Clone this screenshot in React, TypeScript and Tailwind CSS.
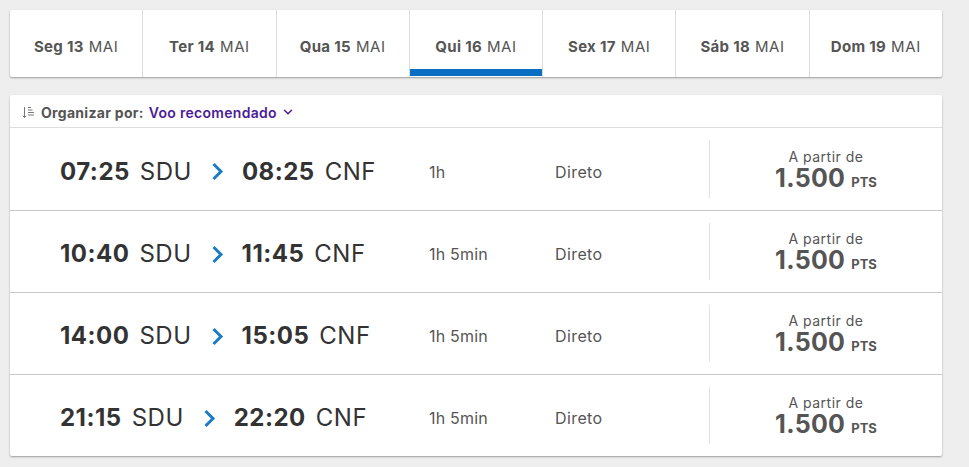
import { ChevronDown } from "lucide-react"

const days = [
  { d: "Seg", n: "13" },
  { d: "Ter", n: "14" },
  { d: "Qua", n: "15" },
  { d: "Qui", n: "16", active: true },
  { d: "Sex", n: "17" },
  { d: "Sáb", n: "18" },
  { d: "Dom", n: "19" },
]

const flights = [
  { dep: "07:25", arr: "08:25", dur: "1h" },
  { dep: "10:40", arr: "11:45", dur: "1h 5min" },
  { dep: "14:00", arr: "15:05", dur: "1h 5min" },
  { dep: "21:15", arr: "22:20", dur: "1h 5min" },
]

function SortIcon() {
  return (
    <svg width="13" height="13" viewBox="0 0 13 13" fill="none" stroke="#777" strokeWidth="1">
      <path d="M2.5 1v10.5M0.8 9.8l1.7 1.8 1.7-1.8" />
      <path d="M6 1.5h3M6 4h4.5M6 6.5h6M6 9h6" />
    </svg>
  )
}

function Arrow() {
  return (
    <svg width="13" height="19" viewBox="0 0 13 19" fill="none" className="ml-[19px] mr-[18px]">
      <path d="M2.5 2l7.5 7.5-7.5 7.5" stroke="#1b7bc4" strokeWidth="3" />
    </svg>
  )
}

export default function App() {
  return (
    <div
      className="min-h-[467px] w-[969px] bg-[#eeeeee] pt-[10px] pl-[10px]"
      style={{ fontFamily: "Inter, 'Noto Sans', sans-serif" }}
    >
      {/* Date tabs */}
      <div className="flex w-[932px] h-[67px] bg-white rounded-[2px] shadow-[0_1px_2px_rgba(0,0,0,0.35)]">
        {days.map((day, i) => (
          <div
            key={day.n}
            className={`relative flex-1 flex items-center justify-center text-[15px] text-[#555] pt-[8px] tracking-[0.3px] ${
              i > 0 ? "border-l border-[#dcdcdc]" : ""
            }`}
          >
            <span className="font-bold">
              {day.d} {day.n}
            </span>
            <span className="ml-[5px] tracking-[0.6px]">MAI</span>
            {day.active && <div className="absolute left-0 right-0 bottom-[1px] h-[7px] bg-[#0a6fc2]" />}
          </div>
        ))}
      </div>

      {/* Results */}
      <div className="mt-[18px] w-[932px] bg-white rounded-[2px] shadow-[0_1px_2px_rgba(0,0,0,0.35)]">
        <div className="flex items-center h-[33px] pl-[12px] pt-[2px] border-b border-[#dedede] text-[14px] tracking-[0.3px]">
          <SortIcon />
          <span className="ml-[6px] font-bold text-[#555]">Organizar por:</span>
          <span className="ml-[5px] font-semibold text-[#4a1d96]">Voo recomendado</span>
          <ChevronDown className="ml-[4px] text-[#4a1d96]" size={14} strokeWidth={2.5} />
        </div>

        {flights.map((f, i) => (
          <div
            key={f.dep}
            className={`flex items-center h-[82px] ${i > 0 ? "border-t border-[#c8c8c8]" : ""}`}
          >
            <div className="w-[419px] pl-[50px] pt-[5px] flex items-center text-[24px] text-[#333] tracking-[0.5px]">
              <span className="font-bold">{f.dep}</span>
              <span className="ml-[10px]">SDU</span>
              <Arrow />
              <span className="font-bold">{f.arr}</span>
              <span className="ml-[10px]">CNF</span>
            </div>
            <div className="w-[126px] pt-[5px] text-[16px] text-[#555] tracking-[0.2px]">{f.dur}</div>
            <div className="w-[154px] pt-[5px] text-[16px] text-[#555] tracking-[0.4px]">Direto</div>
            <div className="self-stretch my-[12px] border-l border-[#e2e2e2]" />
            <div className="flex-1 flex flex-col items-center text-[#555] pt-[5px]">
              <span className="text-[14px] leading-[16px] tracking-[0.5px]">A partir de</span>
              <span className="leading-[26px]">
                <span className="text-[25px] font-bold tracking-[0.3px]">1.500</span>
                <span className="ml-[6px] text-[13px] font-bold">PTS</span>
              </span>
            </div>
          </div>
        ))}
      </div>
    </div>
  )
}
